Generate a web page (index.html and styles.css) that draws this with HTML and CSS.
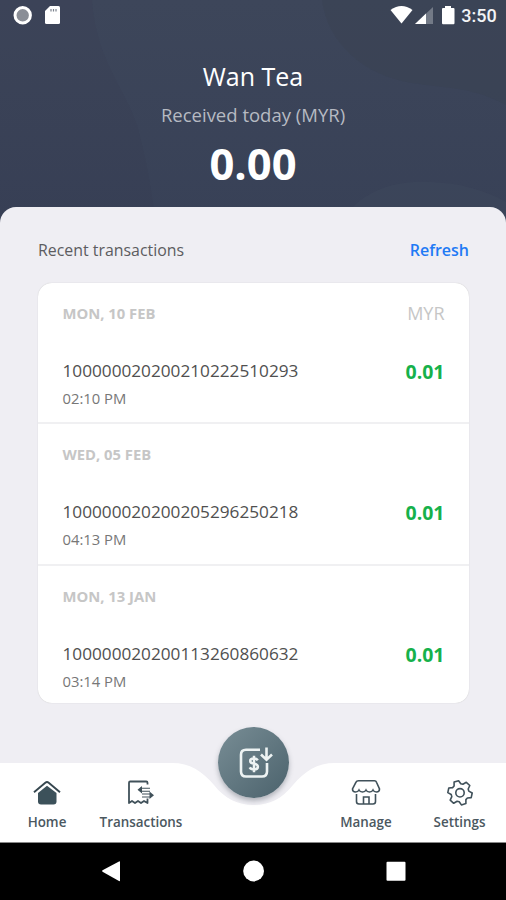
FILE: index.html
```html
<!doctype html>
<html>
<head>
<meta charset="utf-8">
<title>Wan Tea</title>
<link rel="stylesheet" href="styles.css">
</head>
<body>
<div class="phone">
	<div class="header">
		<svg class="header-bg" width="506" height="225" viewBox="0 0 506 225">
			<path d="M0 0h92c4 60 34 90 45 125 8 28 14 60 19 100H0z" fill="#333850" opacity=".13"/>
			<path d="M322 0c5 42 40 75 90 83 40 6 60 4 94 22V0z" fill="#36404d" opacity=".25"/>
			<path d="M350 210c20-22 50-30 80-28 30 1 55 8 76 20v23H350z" fill="#434d61" opacity=".3"/>
		</svg>
		<div class="status">
			<svg width="64" height="30" viewBox="0 0 64 30">
				<circle cx="22.700" cy="15.300" r="7.700" fill="#8a8e96" stroke="#fff" stroke-width="3"/>
				<path d="M50 6h8.500q1.500 0 1.500 1.500v15q0 1.500-1.500 1.500h-12q-1.500 0-1.500-1.500V11z" fill="#fff"/>
				<path d="M51 9v2.500M53.500 9v2.500M56 9v2.500" stroke="#7b818c" stroke-width="1.200"/>
			</svg>
			<svg class="right" width="70" height="30" viewBox="0 0 70 30">
				<path d="M4.500 10Q15.500 2 26.500 10L15.500 23.500z" fill="#fff"/>
				<path d="M47 7v17H29z" fill="#737a87"/>
				<path d="M40 13.500V24H29z" fill="#fff"/>
				<path d="M59 6h6v2h2.500q1 0 1 1v14q0 1.200-1 1.200h-10.500q-1 0-1-1.200V9q0-1 1-1h2z" fill="#fff"/>
			</svg>
			<span class="time">3:50</span>
		</div>
		<h1>Wan Tea</h1>
		<p class="label">Received today (MYR)</p>
		<p class="total">0.00</p>
	</div>
	<div class="sheet">
		<div class="title">
			<h2>Recent transactions</h2>
			<a href="#">Refresh</a>
		</div>
		<ul class="list">
			<li>
				<div class="day"><b>MON, 10 FEB</b><span>MYR</span></div>
				<div class="row"><span class="no">100000020200210222510293</span><span class="amount">0.01</span></div>
				<p class="hour">02:10 PM</p>
			</li>
			<li>
				<div class="day"><b>WED, 05 FEB</b></div>
				<div class="row"><span class="no">100000020200205296250218</span><span class="amount">0.01</span></div>
				<p class="hour">04:13 PM</p>
			</li>
			<li>
				<div class="day"><b>MON, 13 JAN</b></div>
				<div class="row"><span class="no">100000020200113260860632</span><span class="amount">0.01</span></div>
				<p class="hour">03:14 PM</p>
			</li>
		</ul>
	</div>
	<div class="nav">
		<svg class="nav-bg" width="506" height="79" viewBox="0 0 506 79">
			<path d="M0 0H172C190 0 202 8 214 22C225 36 238 42 253.500 42S282 36 293 22C305 8 317 0 335 0H506V79H0z" fill="#fff"/>
		</svg>
		<a href="#" class="home">
			<svg width="30" height="30" viewBox="0 0 30 30">
				<path d="M2 15.200 13.300 5.700q1.700-1.300 3.400 0L28 15.200" fill="none" stroke="#36474f" stroke-width="1.900"/>
				<path d="M15 8.800 24.500 16V24.500q0 3-3 3H9q-3 0-3-3V16z" fill="#3c515a"/>
			</svg>
			<span>Home</span>
		</a>
		<a href="#" class="trans">
			<svg width="30" height="30" viewBox="0 0 30 30">
				<path d="M21.500 7.500V5.700q0-1.200-1.200-1.200H4.200Q3 4.500 3 5.700V26l3-2 3 2 3-2 3 2 3-2 3.500 2V21.500" fill="none" stroke="#40515a" stroke-width="1.800" stroke-linejoin="round"/>
				<path d="M14 11.300h10M14 14.300h10M16 17h9M16 20h9" stroke="#40515a" stroke-width="1.100"/>
				<path d="M16 9v7.500l-4.500-3.700zM23.500 14.500V22l4.500-3.700z" fill="#40515a"/>
			</svg>
			<span>Transactions</span>
		</a>
		<a href="#" class="manage">
			<svg width="30" height="30" viewBox="0 0 30 30" fill="none" stroke="#40515a" stroke-width="1.600">
				<path d="M7.500 3.800H23.500Q25 3.800 25.500 5.200L28.500 12q0 3-3 3-2.600 0-3.500-2-1 2-3.500 2t-3.500-2q-1 2-3.500 2t-3.500-2q-1 2-3.500 2-3 0-3-3L5 5.200q.5-1.400 2.500-1.400z"/>
				<path d="M5.500 17V24.500q0 2.500 2.500 2.500H22q2.500 0 2.500-2.500V17M12.500 27v-7h5.500v7"/>
			</svg>
			<span>Manage</span>
		</a>
		<a href="#" class="settings">
			<svg width="30" height="30" viewBox="0 0 30 30" fill="none" stroke="#40515a" stroke-width="1.600" stroke-linejoin="round">
				<path transform="translate(15 15.800)" d="M8.800-1.700 12.200.2 11.200 4.800 7.400 5.200 5.900 6.800 5.900 10.700 1.400 12.100-.8 9-2.900 8.500-6.300 10.500-9.800 7.300-8.200 3.800-8.800 1.700-12.200-.2-11.200-4.800-7.400-5.200-5.900-6.800-5.900-10.700-1.400-12.100.8-9 2.900-8.500 6.300-10.500 9.800-7.300 8.200-3.800z"/>
				<circle cx="15" cy="15.800" r="4.200"/>
			</svg>
			<span>Settings</span>
		</a>
		<a href="#" class="pay">
			<svg width="71" height="71" viewBox="0 0 71 71" fill="none" stroke="#edf3f3">
				<path d="M42 22.700H28q-5 0-5 5V44.500q0 5 5 5H44q5 0 5-5V36" stroke-width="2.600"/>
				<path d="M48.500 20.500V32M43 27.500l5.500 5.200 5.500-5.200" stroke-width="2.600"/>
				<path d="M39.800 33.300q-1.200-1.800-4-1.800-3.600 0-3.600 2.500 0 2.300 3.800 2.700 3.900.5 3.900 3 0 2.700-3.900 2.700-3.200 0-4.300-2M36 28.700v16.500" stroke-width="2.500"/>
			</svg>
		</a>
	</div>
	<div class="keys">
		<svg width="506" height="57" viewBox="0 0 506 57" fill="#fff">
			<path d="M119 18.500q1-.5 1 .5v18.500q0 1-1 .5l-16.500-9.200q-.8-.8 0-1.600z"/>
			<circle cx="253.600" cy="28" r="10.400"/>
			<rect x="386.500" y="18.700" width="19" height="19" rx="1"/>
		</svg>
	</div>
</div>
</body>
</html>
```
FILE: styles.css
```css
*{margin:0; padding:0; list-style:none; text-decoration:none; box-sizing:border-box;}
body{font-family:"Open Sans","Noto Sans",sans-serif; background:#000;}
svg{display:block;}
.phone{width:506px; height:900px; overflow:hidden; background:#efeef3; display:flex; flex-direction:column;}

.header{position:relative; height:223px; margin-bottom:-16px; flex:none; background:linear-gradient(#3d465a,#384157); text-align:center; color:#fff;}
.header-bg{position:absolute; left:0; top:0;}
.status{position:relative; height:31px; display:flex;}
.status .right{margin-left:auto; margin-right:5px;}
.time{width:45px; padding-right:9px; font:500 18px/32px Roboto,sans-serif; color:#f3f4f6; white-space:nowrap;}
.header h1{position:relative; padding-top:25px; font-size:25px; line-height:40px; font-weight:400;}
.label{position:relative; font-size:18.5px; line-height:38px; color:#b6bac2;}
.total{position:relative; font-size:43.5px; line-height:60px; font-weight:700;}

.sheet{position:relative; height:556px; flex:none; padding:24px 37px 0 38px; background:#efeef3; border-radius:16px 16px 0 0;}
.title{display:flex; justify-content:space-between; height:52px; line-height:38px;}
.title h2{font-size:15.9px; font-weight:400; color:#5c5c60;}
.title a{font-size:16px; font-weight:600; color:#1f7af5;}
.list{height:420px; background:#fff; border-radius:14px; overflow:hidden; box-shadow:0 0 1px #bbb;}
.list li{height:142px; padding:19px 24.5px 0 24.5px; border-bottom:2px solid #f0f0f2;}
.list li:first-child{height:141px;}
.list li:last-child{border:0;}
.day{display:flex; justify-content:space-between; height:50px; line-height:23px; color:#c6c6c6;}
.day b{font-size:14.8px; font-weight:700;}
.day span{font-size:18px;}
.row{display:flex; justify-content:space-between; line-height:37px; height:34px;}
.no{font-size:17.2px; color:#505050;}
.amount{font-size:19.5px; line-height:40px; font-weight:700; color:#16b14b;}
.hour{font-size:14.8px; line-height:25px; color:#777;}

.nav{position:relative; height:78px; flex:none; padding-top:14px; display:flex;}
.nav-bg{position:absolute; left:0; top:0;}
.nav a{position:relative; display:flex; flex-direction:column; align-items:center; font-size:13.4px; line-height:31px; font-weight:600; color:#4b585f;}
.home{width:94px;}
.trans{width:94px;}
.manage{width:94px; margin-left:131px;}
.settings{width:93px;}
.nav .pay{position:absolute; left:218px; top:-36px; width:71px; height:71px; border-radius:50%; background:linear-gradient(135deg,#788d95,#4b626c); box-shadow:0 3px 5px rgba(60,70,80,.35);}

.keys{height:59px; flex:none; background:#000; border-top:2px solid #888;}
```
